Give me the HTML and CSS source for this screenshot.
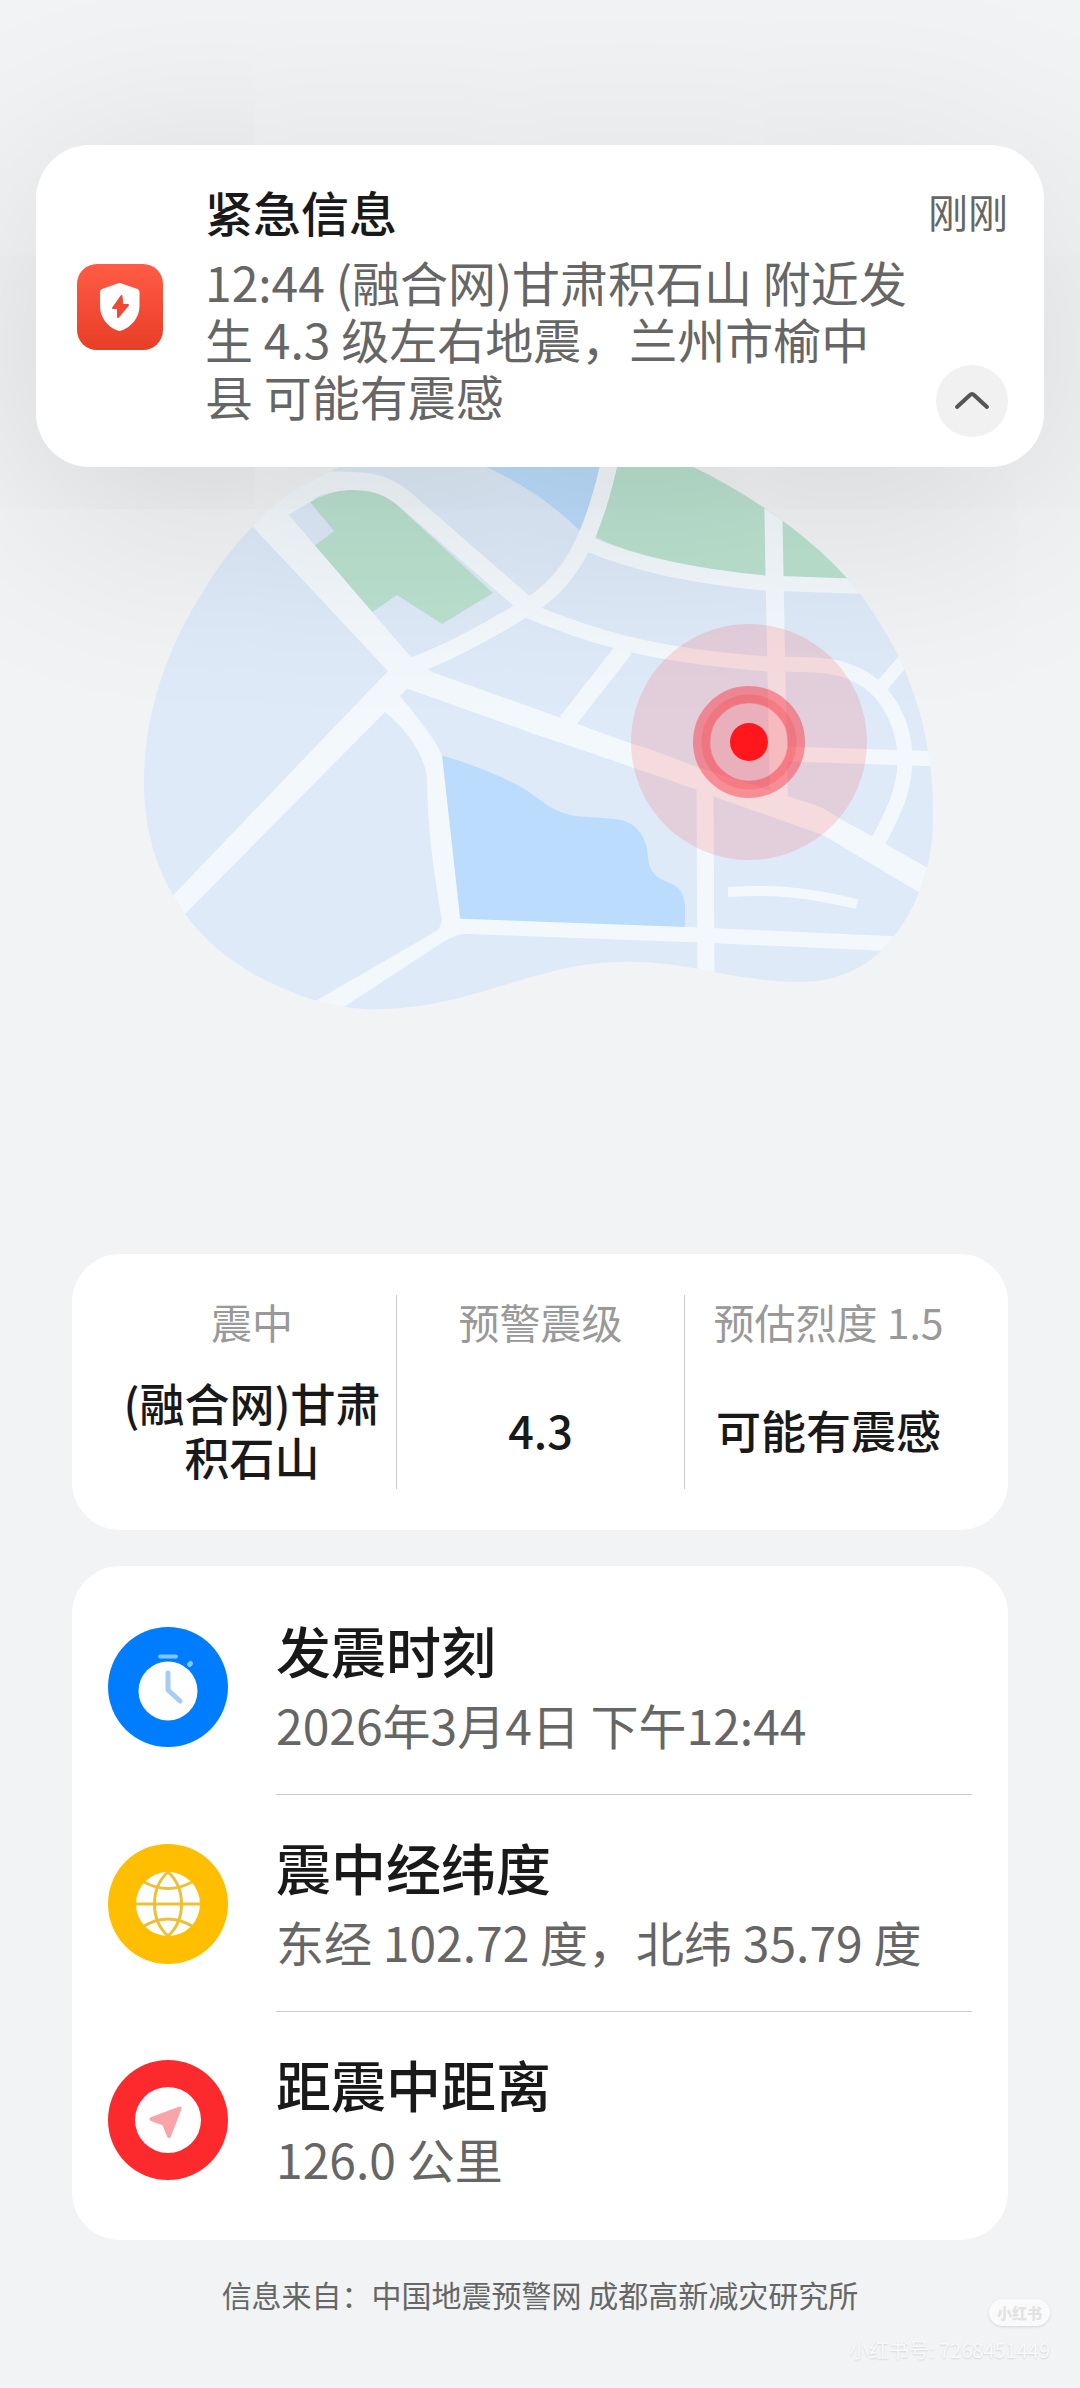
FILE: index.html
```html
<!DOCTYPE html>
<html lang="zh-CN">
<head>
  <meta charset="UTF-8">
  <meta name="viewport" content="width=device-width, initial-scale=1.0">
  <title>地震预警</title>
  <link rel="stylesheet" href="styles.css">
</head>
<body>
  <section class="notice">
    <svg class="notice-icon" viewBox="0 0 86 86" aria-hidden="true">
      <defs>
        <linearGradient id="app-red" x1="0" y1="0" x2="0" y2="1">
          <stop offset="0" stop-color="#ff5b45"/>
          <stop offset="1" stop-color="#e83e27"/>
        </linearGradient>
      </defs>
      <rect width="86" height="86" rx="20" fill="url(#app-red)"/>
      <path d="M40.5 19.5Q42.5 18.500 44.5 19.5L60.5 25Q62.5 26 62.5 28V42C62.5 54 54 63 44.5 66.5Q42.5 67.3 40.5 66.5C31 63 23 54 23 42V28Q23 26 25 25Z" fill="#fff"/>
      <path d="M44.5 32L36 44H41V53L51 41H45.5Z" fill="#f04a34" stroke="#f04a34" stroke-width="2" stroke-linejoin="round"/>
    </svg>
    <div class="notice-body">
      <div class="notice-head">
        <h1>紧急信息</h1>
        <span class="notice-time">刚刚</span>
      </div>
      <div class="notice-row">
        <p>12:44 (融合网)甘肃积石山 附近发生 4.3 级左右地震，兰州市榆中县 可能有震感</p>
        <button type="button" class="collapse" aria-label="收起">
          <svg viewBox="0 0 72 72"><path d="M21 42L34 30Q36 28 38 30L51 42"/></svg>
        </button>
      </div>
    </div>
  </section>

  <main>
    <svg class="map" viewBox="72 400 936 624" role="img" aria-label="震中位置地图">
      <defs>
        <clipPath id="blob">
          <path d="M318 478C290 492 268 508 253 526C230 550 214 572 203 592C168 645 144 715 144 781C144 835 158 875 185 914C215 955 260 983 317 1001C340 1008 365 1010 383 1009C450 1007 500 984 550 972C600 959 650 958 713 972C750 979 790 984 817 981C845 977 862 967 878 954C915 920 934 865 933 817C934 745 915 690 897 653C885 630 872 610 860 594C840 568 815 545 783 521C750 497 720 480 693 467C600 420 420 420 318 478Z"/>
        </clipPath>
      </defs>
      <g clip-path="url(#blob)">
        <rect x="72" y="400" width="936" height="624" fill="#deeaf8"/>

        <!-- water -->
        <path fill="#bbdcfc" d="M440 450C500 467 550 500 584 535L610 440Z"/>
        <path fill="#bbdcfc" d="M440 755C470 763 500 776 523 788C542 800 550 811 575 816L615 819C635 821 647 835 648 858C650 878 664 880 674 885C682 890 685 898 685 908V930L455 920Z"/>

        <!-- parks -->
        <path fill="#bbe1cf" d="M310 502Q328 492 347 490Q378 487 397 505L493 593L442 624L397 595L371 613L314 546L334 531Z"/>
        <path fill="#bbe1cf" d="M625 440L596 537C640 560 700 570 765 578L870 582V440Z"/>

        <!-- wide roads -->
        <g fill="#f3f8fc">
          <path d="M226 498L388 671L160 909L175 924L385 712C404 728 425 752 427 780C428 830 432 860 442 921Q440 930 433 933L300 1010L330 1016L443 942Q455 935 463 934L460 917L442 755C436 742 425 726 400 696L408 688L432 672L410 656L288 514L262 484Z"/>
          <path d="M405 668L432 672L550 714L577 724L630 743C660 752 680 761 700 768L788 796C800 801 812 803 823 808L837 817L875 838L940 875L930 899L823 835L715 797L695 789C650 774 590 752 540 736L400 686Z"/>
          <path d="M240 510L288 515L312 501L350 472L300 470Z"/>
        </g>

        <!-- streets -->
        <g fill="none" stroke="#f3f8fc" stroke-width="15">
          <path stroke-width="17" d="M415 665Q460 648 521 611C565 587 592 548 612 450"/>
          <path stroke-width="18" d="M270 512C300 490 330 481 350 481C370 481 385 484 402 497L524 603"/>
          <path d="M522 608C590 637 650 655 767 664C800 665 830 663 850 672C885 685 903 720 905 755C906 790 892 815 878 842"/>
          <path stroke-width="13" d="M881 687L910 653"/>
          <path stroke-width="18" d="M625 648L567 722"/>
          <path d="M588 544C640 566 700 577 765 583L880 587"/>
          <path stroke-width="18" d="M773 490L775 600L779 800"/>
          <path d="M786 754L945 759"/>
          <path stroke-width="17" d="M705 785L706 990"/>
          <path d="M455 926L700 935L920 945"/>
          <path stroke-width="10" d="M728 892C780 889 810 893 857 904"/>
        </g>
      </g>

      <!-- epicenter -->
      <circle cx="749" cy="742" r="118" fill="#ff4a4c" fill-opacity=".17"/>
      <circle cx="749" cy="742" r="39" fill="#ff4a4c" fill-opacity=".22"/>
      <circle cx="749" cy="742" r="47.5" fill="none" stroke="#f83a44" stroke-width="17" stroke-opacity=".48"/>
      <circle cx="749" cy="742" r="43" fill="none" stroke="#f83a44" stroke-width="9" stroke-opacity=".22"/>
      <circle cx="749" cy="742" r="19" fill="#ff171d"/>
    </svg>

    <dl class="card summary">
      <div class="stat">
        <dt>震中</dt>
        <dd>(融合网)甘肃积石山</dd>
      </div>
      <div class="stat">
        <dt>预警震级</dt>
        <dd>4.3</dd>
      </div>
      <div class="stat">
        <dt>预估烈度 1.5</dt>
        <dd>可能有震感</dd>
      </div>
    </dl>

    <ul class="card details">
      <li>
        <svg class="detail-icon" viewBox="0 0 120 120" aria-hidden="true">
          <circle cx="60" cy="60" r="60" fill="#007dff"/>
          <path d="M52 29.5H68" stroke="#80c6ff" stroke-width="4" stroke-linecap="round"/>
          <path d="M81.5 37.5L82.5 36.5" stroke="#80c6ff" stroke-width="5" stroke-linecap="round"/>
          <circle cx="60" cy="64" r="29.5" fill="#fff"/>
          <path d="M60 46V63L72 74" fill="none" stroke="#a5cdf6" stroke-width="5" stroke-linecap="round" stroke-linejoin="round"/>
        </svg>
        <div class="detail-text">
          <h2>发震时刻</h2>
          <p>2026年3月4日 下午12:44</p>
        </div>
      </li>
      <li>
        <svg class="detail-icon" viewBox="0 0 120 120" aria-hidden="true">
          <circle cx="60" cy="60" r="60" fill="#ffbf00"/>
          <circle cx="60" cy="60" r="32" fill="#fff"/>
          <g fill="none" stroke="#ecc037" stroke-width="3">
            <path d="M28 60H92"/>
            <path d="M60 28C42 44 42 76 60 92C78 76 78 44 60 28Z"/>
            <path d="M36 38Q60 51 84 38"/>
            <path d="M36 82Q60 68 84 82"/>
          </g>
        </svg>
        <div class="detail-text">
          <h2>震中经纬度</h2>
          <p>东经 102.72 度，北纬 35.79 度</p>
        </div>
      </li>
      <li>
        <svg class="detail-icon" viewBox="0 0 120 120" aria-hidden="true">
          <circle cx="60" cy="60" r="60" fill="#fc2a2d"/>
          <circle cx="60" cy="60" r="33" fill="#fff"/>
          <path d="M43.5 59L71.5 48.5L61 76L56 63.5Z" fill="#f9a4a8" stroke="#f9a4a8" stroke-width="4" stroke-linejoin="round"/>
        </svg>
        <div class="detail-text">
          <h2>距震中距离</h2>
          <p>126.0 公里</p>
        </div>
      </li>
    </ul>
  </main>

  <footer>信息来自：中国地震预警网 成都高新减灾研究所</footer>

  <div class="watermark">
    <span class="watermark-logo">小红书</span>
    <span class="watermark-id">小红书号: 7268451449</span>
  </div>
</body>
</html>
```

FILE: styles.css
```css
* {
  box-sizing: border-box;
  margin: 0;
  padding: 0;
}

body {
  position: relative;
  min-height: 100vh;
  background-color: #f1f3f5;
  font-family: "Noto Sans CJK SC", "Noto Sans", sans-serif;
  color: #191919;
}

/* notification banner, floats over the page */
.notice {
  position: absolute;
  top: 145px;
  left: 36px;
  right: 36px;
  display: flex;
  align-items: center;
  gap: 42px;
  padding: 32px 36px 30px 41px;
  border-radius: 54px;
  background-color: #fff;
  box-shadow: 0 40px 220px rgba(0, 0, 0, 0.14);
}

.notice-icon {
  flex: none;
  width: 86px;
  height: 86px;
}

.notice-body {
  flex: 1;
}

.notice-head {
  display: flex;
  justify-content: space-between;
  align-items: center;
  height: 68px;
  margin-bottom: 8px;
}

.notice-head h1 {
  font-size: 48px;
  font-weight: 500;
}

.notice-time {
  font-size: 40px;
  color: #666;
}

.notice-row {
  display: flex;
  justify-content: space-between;
  min-height: 184px;
}

.notice-row p {
  flex: 1;
  max-width: 708px;
  font-size: 48px;
  line-height: 57px;
  color: #666;
}

.collapse {
  flex: none;
  align-self: flex-end;
  width: 72px;
  height: 72px;
  border: none;
  border-radius: 50%;
  background-color: #f1f1f1;
  cursor: pointer;
}

.collapse svg {
  display: block;
  fill: none;
  stroke: #555;
  stroke-width: 4;
  stroke-linecap: round;
}

main {
  padding: 400px 72px 0;
}

.map {
  display: block;
  width: 100%;
  margin-bottom: 230px;
}

.card {
  border-radius: 48px;
  background-color: #fff;
}

.summary {
  display: grid;
  grid-template-columns: repeat(3, 1fr);
  padding: 41px 36px;
  margin-bottom: 36px;
}

.stat {
  display: flex;
  flex-direction: column;
  padding: 0 12px;
  text-align: center;
}

.stat + .stat {
  border-left: 1px solid #ccc;
}

.stat dt {
  font-size: 41px;
  line-height: 52px;
  margin-bottom: 28px;
  color: #999;
  white-space: nowrap;
}

.stat dd {
  display: flex;
  flex: 1;
  align-items: center;
  justify-content: center;
  margin-bottom: 4px;
  min-height: 110px;
  font-size: 45px;
  font-weight: 500;
  line-height: 54px;
}

.details {
  padding: 12px 36px;
  list-style: none;
}

.details li {
  display: flex;
  align-items: center;
  gap: 48px;
}

.detail-icon {
  flex: none;
  width: 120px;
  height: 120px;
}

.detail-text {
  flex: 1;
  padding: 32px 0 34px;
  border-bottom: 1px solid #ccc;
}

.details li:last-child .detail-text {
  border-bottom: none;
}

.detail-text h2 {
  font-size: 55px;
  font-weight: 500;
  line-height: 78px;
}

.detail-text p {
  font-size: 48px;
  line-height: 72px;
  color: #666;
}

footer {
  padding: 34px 72px 72px;
  font-size: 30px;
  line-height: 40px;
  text-align: center;
  color: #666;
}

.watermark {
  position: absolute;
  right: 30px;
  bottom: 24px;
  display: flex;
  flex-direction: column;
  align-items: flex-end;
  gap: 10px;
  color: #f8f9fa;
  text-shadow: 0 1px 2px rgba(0, 0, 0, 0.12);
}

.watermark-logo {
  padding: 0 8px;
  border-radius: 14px;
  background-color: #fafafa;
  box-shadow: 0 1px 3px rgba(0, 0, 0, 0.12);
  font-size: 15px;
  font-weight: 900;
  line-height: 27px;
  color: #e2e3e4;
  text-shadow: none;
}

.watermark-id {
  font-size: 20px;
  line-height: 28px;
}
```
